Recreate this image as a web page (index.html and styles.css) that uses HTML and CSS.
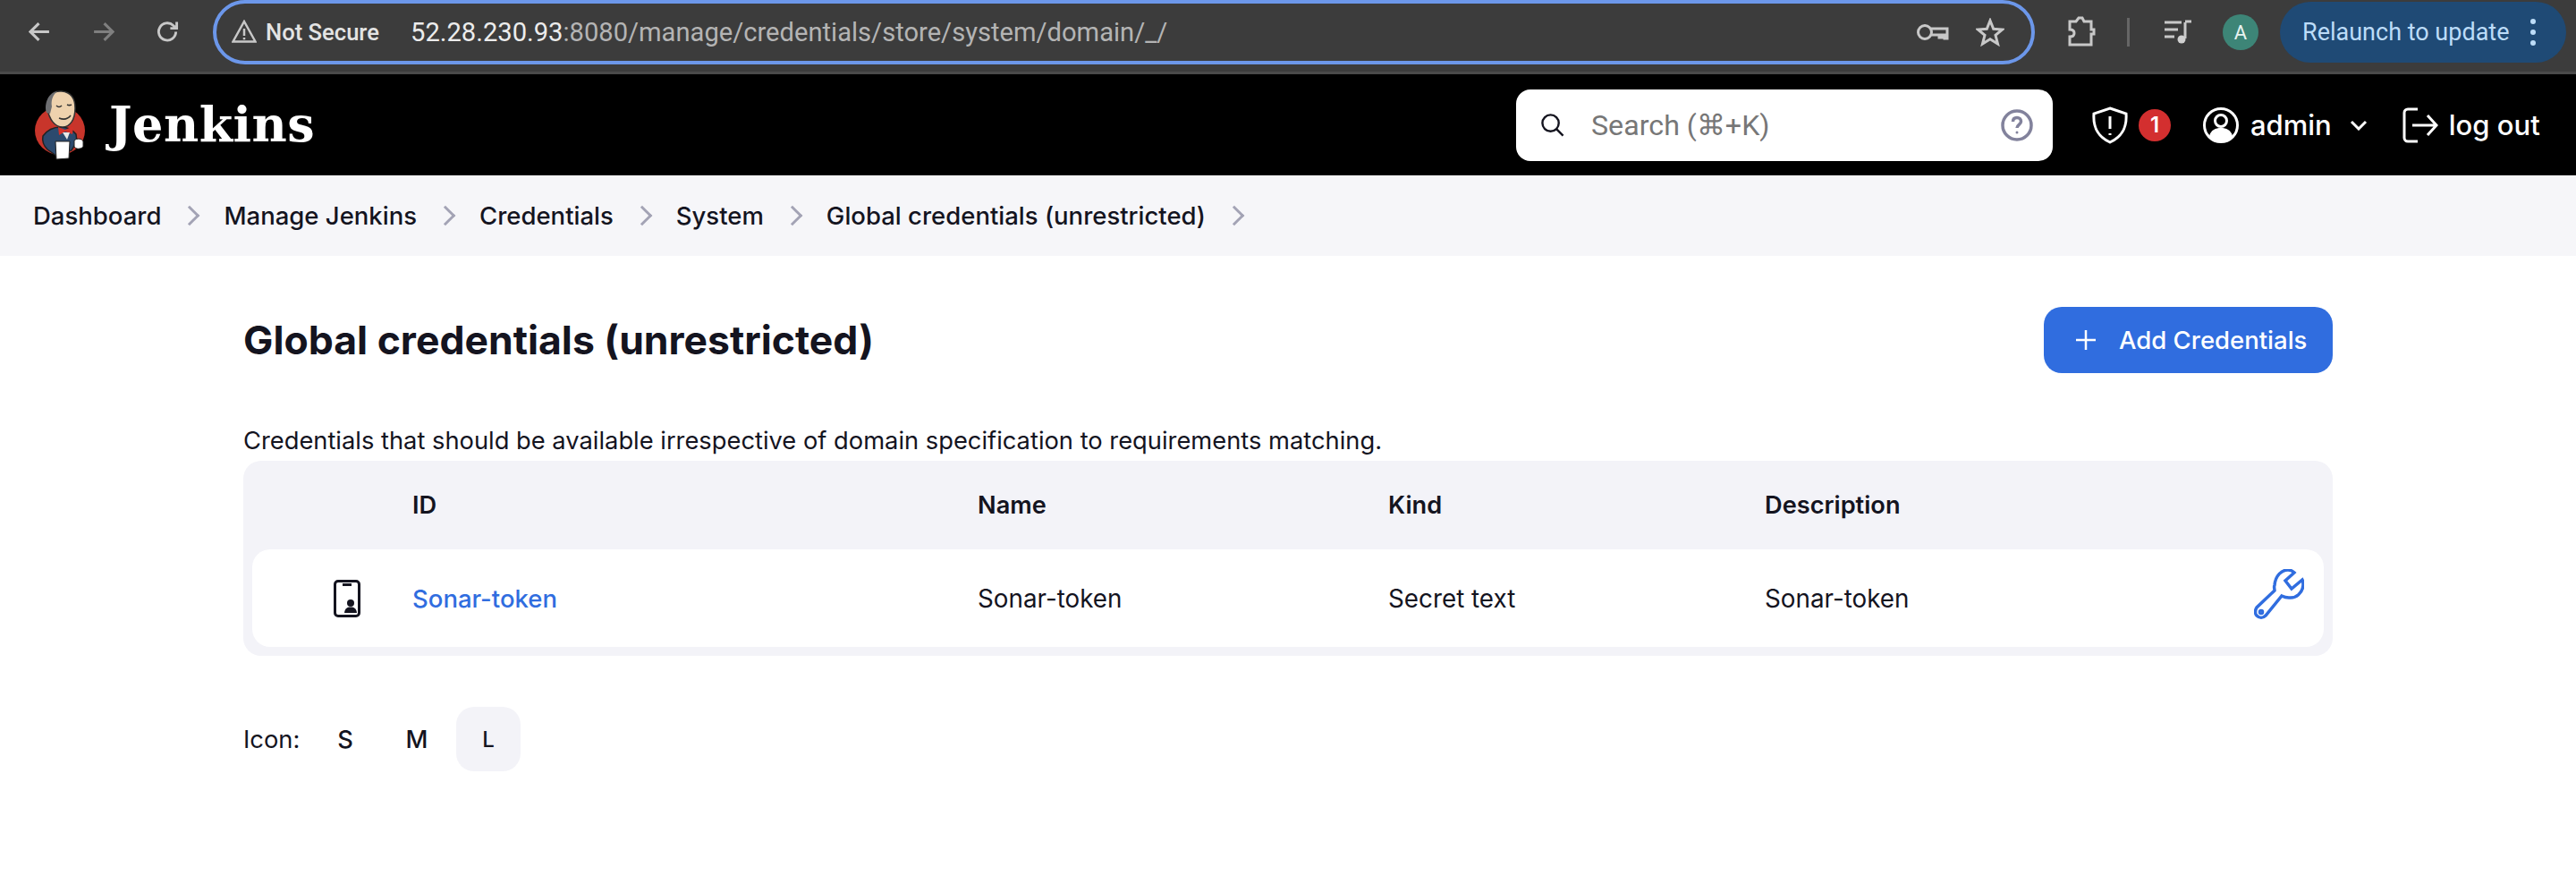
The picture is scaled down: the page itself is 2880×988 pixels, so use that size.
FILE: index.html
```html
<!DOCTYPE html>
<html>
<head>
    <meta charset="utf-8" />
    <title>Global credentials (unrestricted)</title>
    <link rel="stylesheet" href="styles.css">
</head>
<body>
    <!-- browser toolbar -->
    <div class="chrome">
        <svg class="ico ico_back" viewBox="0 0 24 24"><path d="M22 12H3M11 3l-9 9 9 9" /></svg>
        <svg class="ico ico_next" viewBox="0 0 24 24"><path d="M2 12h19M13 3l9 9-9 9" /></svg>
        <svg class="ico ico_reload" viewBox="0 0 26 26"><path d="M22.5 13a10 10 0 1 1-3-7.2L23 9M23.5 1.5V9H16" /></svg>
        <div class="omnibox">
            <svg class="ico_warn" viewBox="0 0 28 26"><path d="M14 2 26.500 24.500H1.500Z" /><path d="M14 10v8M14 20v2.200" /></svg>
            <span class="not_secure">Not Secure</span>
            <span class="url"><b>52.28.230.93</b>:8080/manage/credentials/store/system/domain/_/</span>
            <svg class="ico_key" viewBox="0 0 36 24"><circle cx="9" cy="12" r="7.500" /><path d="M16 8h18v11h-3v-4h-3v3h-3v-3h-9" /></svg>
            <svg class="ico_star" viewBox="0 0 32 32"><path d="M16 3l3.700 9.300 10 .7-7.700 6.300 2.500 9.700L16 23.700 7.500 29l2.500-9.700L2.300 13l10-.7z" /></svg>
        </div>
        <svg class="ico_ext" viewBox="0 0 32 36"><path d="M3 7h7l3-4h4l2 4h8v9h3v5h-3v12H3V24c4 0 5-2 5-4s-1-4-5-4z" /></svg>
        <span class="chrome_sep"></span>
        <svg class="ico_media" viewBox="0 0 32 28"><path d="M1 3h19M1 11h15M1 19h11" /><path d="M24 3v18" /><path d="M24 2h7" /><circle class="solid" cx="20" cy="22" r="4.500" /></svg>
        <span class="avatar">A</span>
        <div class="relaunch">
            <span>Relaunch to update</span>
            <span class="dots"><i></i><i></i><i></i></span>
        </div>
    </div>

    <!-- jenkins header -->
    <div class="topnav">
        <a class="brand" href="#">
            <svg class="butler" viewBox="38 100 58 80">
                <ellipse cx="67" cy="146" rx="28" ry="27" fill="#c8352b" />
                <path d="M48 152c5-7 13-10 20-10 6 0 13 3 17 8l1 8-6 10-17 6-10-7c-4-4-6-10-5-15z" fill="#2c4a6e" stroke="#222" stroke-width="1.500" />
                <path d="M53 122c-2-12 5-21 16-20 10 1 15 8 15 19 0 13-6 21-14 21-9 0-15-9-17-20z" fill="#eed2ae" stroke="#333" stroke-width="1.500" />
                <path d="M52 126c-3-10 2-22 12-24-6 5-7 12-6 17l-2 8z" fill="#6e6f72" />
                <path d="M63 118c2 2 4 2 6 0M75 117c2 1 3 1 5 0M66 132c5 2 10 1 13-3" fill="none" stroke="#333" stroke-width="1.500" />
                <path d="M65 142l8 3 9-4-1 9-8-3-7 4z" fill="#d3322a" />
                <path d="M70 148h8l-3 8z" fill="#e8e8e8" />
                <path d="M62 158h16l-1 19-14 1z" fill="#fff" stroke="#222" />
                <path d="M83 157c3-3 9-2 10 1v6c-3 3-8 3-10 0z" fill="#fff" stroke="#222" />
            </svg>
            <span class="brand_name">Jenkins</span>
        </a>
        <div class="search">
            <svg class="ico_search" viewBox="0 0 28 28"><circle cx="12" cy="12" r="9.500" /><path d="M19 19l7.500 7.500" /></svg>
            <span class="search_text">Search (⌘+K)</span>
            <svg class="ico_help" viewBox="0 0 36 36"><circle cx="18" cy="18" r="16" /><path d="M13.500 14c0-3 2-4.500 4.500-4.500s4.500 1.700 4.500 4.200c0 3.500-4.500 3.800-4.500 7.300" /><circle class="solid" cx="18" cy="26" r="1.500" /></svg>
        </div>
        <svg class="nav_ico ico_shield" viewBox="0 0 42 42"><path d="M21 2l18 6c1 14-3 25-18 32C6 33 2 22 3 8z" /><path d="M21 11v14M21 30v2" /></svg>
        <span class="badge">1</span>
        <svg class="nav_ico ico_user" viewBox="0 0 40 40"><circle cx="20" cy="20" r="18.500" /><circle class="hollow" cx="20" cy="15" r="6.500" /><path class="solid" d="M7 32c2-7 7-9 13-9s11 2 13 9c-3 4-8 6.500-13 6.500S10 36 7 32z" /></svg>
        <span class="nav_text nav_admin">admin</span>
        <svg class="nav_ico ico_caret" viewBox="0 0 20 12"><path d="M2 2l8 8 8-8" /></svg>
        <svg class="nav_ico ico_logout" viewBox="0 0 40 40"><path d="M17 2H6a4 4 0 0 0-4 4v28a4 4 0 0 0 4 4h11" /><path d="M11 20h27M28 9l10 11-10 11" /></svg>
        <span class="nav_text nav_logout">log out</span>
    </div>

    <!-- breadcrumb -->
    <ol class="crumbs">
        <li>Dashboard</li>
        <li>Manage Jenkins</li>
        <li>Credentials</li>
        <li>System</li>
        <li>Global credentials (unrestricted)</li>
    </ol>

    <div class="main">
        <div class="title_row">
            <h1>Global credentials (unrestricted)</h1>
            <a class="btn_add" href="#">
                <svg viewBox="0 0 22 22"><path d="M11 0v22M0 11h22" /></svg>
                <span>Add Credentials</span>
            </a>
        </div>
        <p class="desc">Credentials that should be available irrespective of domain specification to requirements matching.</p>

        <div class="cred_table">
            <div class="cred_grid cred_head">
                <span></span>
                <span>ID</span>
                <span>Name</span>
                <span>Kind</span>
                <span>Description</span>
            </div>
            <div class="cred_grid cred_row">
                <span class="cell_icon">
                    <svg viewBox="0 0 30 42"><rect x="1.500" y="1.500" width="27" height="39" rx="3.500" /><path d="M10 5.500h10" /><circle class="solid" cx="19" cy="26" r="4" /><path class="solid" d="M12 37c.5-5 3-6.500 7-6.500s6.500 1.500 7 6.500z" /></svg>
                </span>
                <a href="#">Sonar-token</a>
                <span>Sonar-token</span>
                <span>Secret text</span>
                <span>Sonar-token</span>
                <svg class="ico_wrench" viewBox="0 0 56 56"><path d="M23 18C24 7 31 1 38 1c3 0 5 1 7 3L35 13l7 9 12-10c1 2 1 4 1 6-1 9-8 15-16 14-3 0-6-1-8-2L13 52c-3 3-7 3-10 0-2-2-2-6 0-9l20-19c0-2-1-4 0-6z" /><circle cx="8" cy="48" r="1.500" /></svg>
            </div>
        </div>

        <div class="icon_size">
            <span class="icon_label">Icon:</span>
            <span class="size">S</span>
            <span class="size">M</span>
            <span class="size size_active">L</span>
        </div>
    </div>
</body>
</html>
```

FILE: styles.css
```css
* {
    box-sizing:border-box;
}
html, body {
    margin:0;
    padding:0;
    background:#fff;
}
body {
    font-family:Inter, "Liberation Sans", sans-serif;
    color:#14141f;
    font-size:27.3px;
    height:988px;
    overflow:hidden;
}
svg {
    display:block;
    flex:none;
    fill:none;
}
.solid {
    fill:currentColor;
    stroke:none;
}

/* browser toolbar */
.chrome {
    height:83px;
    background:#3c3c3c;
    border-bottom:3px solid #4a4a4a;
    display:flex;
    align-items:flex-start;
    font-family:Roboto, "Liberation Sans", sans-serif;
    color:#d0d0d0;
}
.chrome svg {
    stroke:#c8c8c8;
    stroke-width:3;
}
.chrome .ico {
    width:25px;
    height:25px;
    margin-top:23px;
}
.chrome .ico_back {
    margin-left:32px;
}
.chrome .ico_next {
    margin-left:46px;
    stroke:#7f7f7f;
}
.chrome .ico_reload {
    margin-left:47px;
}
.omnibox {
    width:2037px;
    height:72px;
    margin-left:38px;
    border:4px solid #6c97ea;
    border-radius:36px;
    display:flex;
    align-items:center;
    padding-left:17px;
}
.chrome .ico_warn {
    width:28px;
    height:26px;
    margin-top:-3px;
    stroke-width:2.500;
}
.not_secure {
    font-size:25.6px;
    font-weight:500;
    color:#e3e3e3;
    margin-left:10px;
    width:162px;
}
.url {
    font-size:29.15px;
    color:#b4b4b4;
    width:1684px;
    white-space:nowrap;
}
.url b {
    font-weight:400;
    color:#ececec;
}
.chrome .ico_key {
    width:36px;
    height:24px;
    margin-left:0;
}
.chrome .ico_star {
    width:32px;
    height:32px;
    margin-left:30px;
}
.chrome .ico_ext {
    width:32px;
    height:36px;
    margin:17px 0 0 36px;
}
.chrome_sep {
    width:3px;
    height:32px;
    background:#666;
    margin:20px 0 0 35px;
}
.chrome .ico_media {
    width:32px;
    height:28px;
    margin:22px 0 0 38px;
}
.avatar {
    width:40px;
    height:40px;
    border-radius:50%;
    background:#3d8577;
    color:#e8f3f0;
    font-size:22px;
    margin:16px 0 0 34px;
    display:flex;
    align-items:center;
    justify-content:center;
}
.relaunch {
    width:320px;
    height:68px;
    margin:2px 0 0 24px;
    border-radius:34px;
    background:#1f4a75;
    color:#bcdcf8;
    font-size:27px;
    display:flex;
    align-items:center;
    padding-left:25px;
    white-space:nowrap;
}
.dots {
    margin-left:24px;
    display:flex;
    flex-direction:column;
    gap:6px;
}
.dots i {
    display:block;
    width:6px;
    height:6px;
    border-radius:50%;
    background:#bcdcf8;
}

/* jenkins header */
.topnav {
    height:113px;
    background:#000;
    color:#fff;
    display:flex;
    align-items:center;
}
.brand {
    display:flex;
    align-items:center;
    width:1695px;
    padding-left:38px;
    color:#fff;
    text-decoration:none;
}
.butler {
    width:58px;
    height:80px;
}
.brand_name {
    font-family:"DejaVu Serif", "Liberation Serif", serif;
    font-weight:700;
    font-size:54px;
    letter-spacing:0.500px;
    margin:-2px 0 0 26px;
    line-height:1;
}
.search {
    width:600px;
    height:80px;
    border-radius:16px;
    background:#fff;
    display:flex;
    align-items:center;
    padding-left:27px;
    font-family:Roboto, "Liberation Sans", sans-serif;
}
.ico_search {
    width:27px;
    height:27px;
    stroke:#14141f;
    stroke-width:2.500;
}
.search_text {
    font-size:32.2px;
    color:#777;
    margin-left:30px;
    width:458px;
}
.ico_help {
    width:36px;
    height:36px;
    stroke:#82829c;
    stroke-width:3.500;
    color:#82829c;
}
.nav_ico {
    stroke:#fff;
    stroke-width:3;
    color:#fff;
}
.ico_shield {
    width:42px;
    height:42px;
    margin-left:43px;
}
.badge {
    width:36px;
    height:36px;
    border-radius:50%;
    background:#d32f2f;
    font-size:24px;
    font-weight:600;
    margin-left:11px;
    display:flex;
    align-items:center;
    justify-content:center;
}
.ico_user {
    width:40px;
    height:40px;
    margin-left:36px;
}
.nav_text {
    font-size:31px;
    font-weight:500;
    margin-left:13px;
}
.nav_logout {
    margin-left:12px;
}
.ico_caret {
    width:20px;
    height:12px;
    margin-left:20px;
}
.ico_logout {
    width:40px;
    height:40px;
    margin-left:39px;
}

/* breadcrumb */
.crumbs {
    height:90px;
    margin:0;
    padding:0 0 0 37px;
    list-style:none;
    background:#f6f6f9;
    display:flex;
    align-items:center;
    font-weight:500;
    font-size:27.5px;
}
.crumbs li {
    display:flex;
    align-items:center;
    white-space:nowrap;
}
.crumbs li:after {
    content:'';
    width:13px;
    height:13px;
    border-top:3px solid #a3a3b5;
    border-right:3px solid #a3a3b5;
    transform:rotate(45deg);
    margin:0 30px 0 24px;
}

/* content */
.main {
    padding:0 272px;
}
.title_row {
    height:188px;
    display:flex;
    justify-content:space-between;
    align-items:flex-start;
    padding-top:57px;
}
h1 {
    margin:0;
    font-size:44.5px;
    font-weight:700;
    line-height:74px;
}
.btn_add {
    width:323px;
    height:74px;
    border-radius:20px;
    background:#306ddf;
    color:#fff;
    font-weight:500;
    font-size:27.5px;
    text-decoration:none;
    display:flex;
    align-items:center;
    padding-left:36px;
    gap:26px;
}
.btn_add svg {
    width:22px;
    height:22px;
    stroke:#fff;
    stroke-width:2.500;
}
.desc {
    margin:0;
    height:41px;
    line-height:38px;
}
.cred_table {
    background:#f3f3f8;
    border-radius:20px;
    padding:0 10px 10px;
}
.cred_grid {
    display:grid;
    grid-template-columns:179px 632px 459px 421px 1fr 56px;
    align-items:center;
}
.cred_head {
    height:99px;
    font-weight:600;
    font-size:27.2px;
}
.cred_row {
    height:109px;
    background:#fff;
    border-radius:20px;
    padding-right:22px;
    font-size:27.8px;
}
.cred_row a {
    color:#306ddf;
    font-weight:500;
    font-size:27.5px;
    text-decoration:none;
}
.cell_icon {
    padding-left:91px;
}
.cell_icon svg {
    width:30px;
    height:42px;
    stroke:#14141f;
    stroke-width:3;
    color:#14141f;
}
.ico_wrench {
    width:56px;
    height:56px;
    stroke:#306ddf;
    stroke-width:3.500;
    margin-top:-10px;
}
.icon_size {
    display:flex;
    align-items:center;
    gap:8px;
    margin-top:57px;
}
.icon_label {
    width:70px;
}
.size {
    width:72px;
    height:72px;
    border-radius:20px;
    font-weight:500;
    display:flex;
    align-items:center;
    justify-content:center;
}
.size_active {
    background:#f3f3f8;
    font-size:24px;
}
```
